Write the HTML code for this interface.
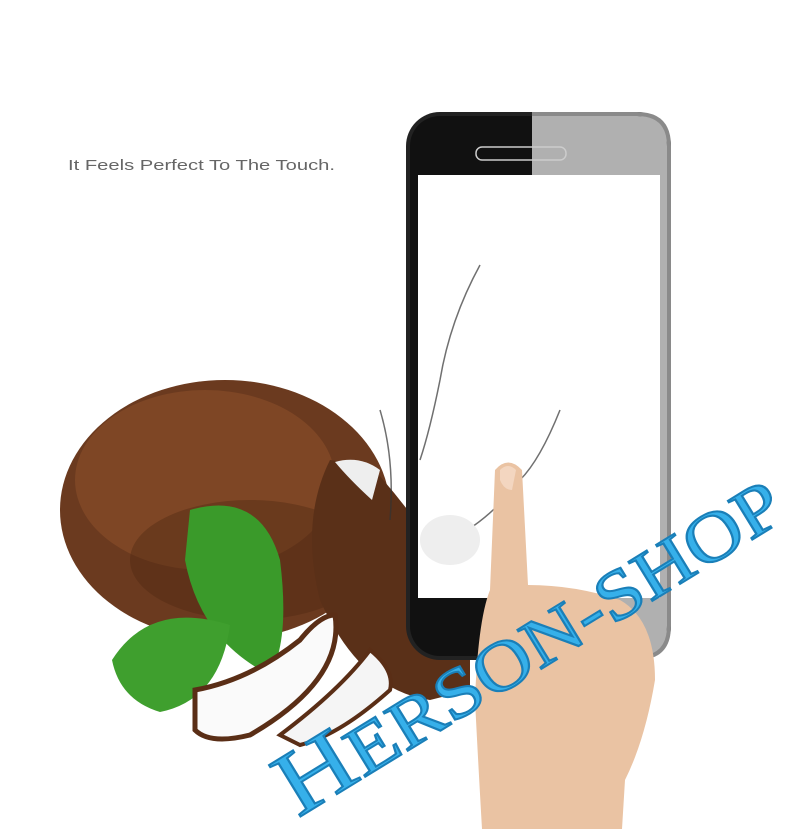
<!DOCTYPE html>
<html><head><style>
body{margin:0;background:#fff;}
svg{display:block}
</style></head><body>
<svg width="802" height="829" viewBox="0 0 802 829" xmlns="http://www.w3.org/2000/svg">
<rect width="802" height="829" fill="#fff"/>
<text x="68" y="170" font-family="Liberation Sans, sans-serif" font-size="15" fill="#666" textLength="267" lengthAdjust="spacingAndGlyphs">It Feels Perfect To The Touch.</text>
<!-- coconut main -->
<ellipse cx="225" cy="510" rx="165" ry="130" fill="#6b3a1f"/>
<ellipse cx="205" cy="480" rx="130" ry="90" fill="#8a4e2a" opacity="0.6"/>
<ellipse cx="250" cy="560" rx="120" ry="60" fill="#4e2812" opacity="0.4"/>
<!-- half coconut -->
<path d="M330 460 Q300 520 320 600 Q360 690 430 700 L470 690 L470 600 Q420 520 370 465 Z" fill="#5a3018"/>
<path d="M335 462 Q360 455 380 470 L372 500 Q350 480 335 462Z" fill="#eee"/>
<!-- phone -->
<rect x="406" y="112" width="265" height="548" rx="34" fill="#222"/>
<path d="M532 112 H637 Q671 112 671 146 V626 Q671 660 637 660 H532Z" fill="#8a8a8a"/>
<rect x="410" y="116" width="257" height="540" rx="30" fill="#111"/>
<path d="M532 116 H637 Q667 116 667 146 V626 Q667 656 637 656 H532Z" fill="#b0b0b0"/>
<rect x="418" y="175" width="242" height="423" fill="#fff"/>
<rect x="476" y="147" width="90" height="13" rx="6" fill="none" stroke="#ccc" stroke-width="1.5"/>
<!-- splash -->
<g stroke="#333" stroke-width="1.5" fill="none" opacity="0.7">
<path d="M480 265 Q450 320 440 380 Q430 430 420 460"/>
<path d="M560 410 Q540 460 520 480 Q490 520 450 540"/>
<path d="M380 410 Q395 460 390 520"/>
</g>
<ellipse cx="450" cy="540" rx="30" ry="25" fill="#eee"/>
<!-- leaves -->
<path d="M190 510 Q260 490 280 560 Q290 640 270 675 Q200 640 185 560Z" fill="#3a9a2a"/>
<path d="M112 660 Q150 600 230 625 Q220 700 160 712 Q120 700 112 660Z" fill="#3f9f2e"/>
<!-- coconut pieces -->
<path d="M195 690 Q250 680 300 640 Q320 615 335 615 Q345 680 250 735 Q210 745 195 730Z" fill="#fafafa" stroke="#5a2e16" stroke-width="5"/>
<path d="M280 735 Q340 690 370 650 Q395 670 390 690 Q340 735 300 745Z" fill="#f5f5f5" stroke="#5a2e16" stroke-width="4"/>
<!-- hand -->
<path d="M495 470 Q508 455 522 470 L528 585 Q575 585 620 600 Q655 620 655 680 Q645 740 625 780 L622 829 L482 829 Q478 760 475 700 Q478 620 490 590Z" fill="#eac3a3"/>
<path d="M500 470 Q508 462 516 470 L512 490 Q504 490 500 480Z" fill="#f3d6c0"/>
<!-- watermark -->
<g transform="translate(298,818) rotate(-31.5)">
<text x="0" y="0" font-family="Liberation Serif, serif" font-size="92" fill="#36b0ea" stroke="#1a7fb8" stroke-width="2" textLength="575" lengthAdjust="spacingAndGlyphs">H<tspan font-size="70">ERSON-SHOP</tspan></text>
</g>
</svg>
</body></html>
